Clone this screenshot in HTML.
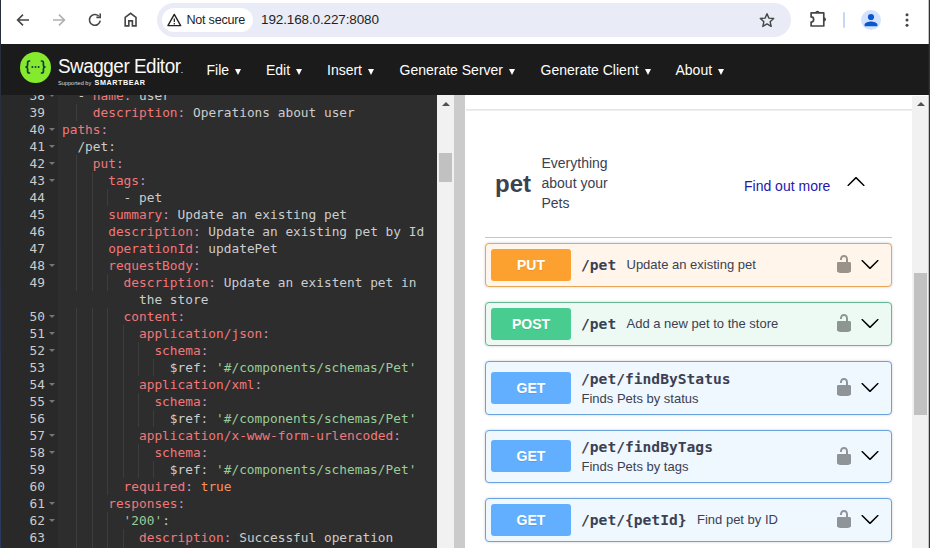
<!DOCTYPE html>
<html lang="en">
<head>
<meta charset="utf-8">
<title>Swagger Editor</title>
<style>
*{box-sizing:border-box;margin:0;padding:0}
html,body{width:930px;height:548px;overflow:hidden;background:#fff}
body{position:relative;font-family:"Liberation Sans",Arial,sans-serif;color:#3b4151}
.abs,#chrome>*,#hdr>*,#ed>*,#ui>*{position:absolute}
i{display:block;font-style:normal}
svg{display:block;overflow:visible}

/* window edges */
#edgeL{left:0;top:0;width:1px;height:548px;background:linear-gradient(#2a2d3a,#2a2f42 40%,#2b3a5e);z-index:50}
#edgeR{left:928px;top:0;width:2px;height:548px;background:linear-gradient(90deg,rgba(48,51,58,.3) 50%,#30333a 50%);z-index:50}

/* ---------- browser chrome ---------- */
#chrome{left:0;top:0;width:930px;height:44px;background:#fff}
#omni{left:157px;top:3px;width:634px;height:34px;border-radius:17px;background:#e9ebf7}
#chip{left:162px;top:8px;width:91px;height:24px;border-radius:12px;background:#fff}
#chiptxt{left:186.5px;top:8px;height:24px;line-height:24px;font-size:12.6px;letter-spacing:-.25px;color:#1f1f1f;white-space:nowrap}
#url{left:261px;top:3px;height:34px;line-height:34px;font-size:13.5px;letter-spacing:-.13px;color:#1f1f1f;white-space:nowrap}
#sep{left:843px;top:12px;width:2px;height:16px;border-radius:1px;background:#c7d6f3}
#avatar{left:861px;top:10px;width:20px;height:20px;border-radius:50%;background:#d3e3fd}

/* ---------- swagger editor top bar ---------- */
#hdr{left:0;top:44px;width:930px;height:50.5px;background:#1b1b1b}
#logo{left:20.3px;top:7.6px;width:31px;height:31px;border-radius:50%;background:#85ea2d}
#brand{left:58px;top:9.3px;font-size:20.5px;line-height:26px;color:#fafafa;white-space:nowrap;letter-spacing:-.5px;transform:scaleX(.92);transform-origin:0 0}
#sup{left:58px;top:35px;font-size:5.6px;line-height:8px;color:#ddd;white-space:nowrap}
#sb{left:94.6px;top:34.6px;font-size:7.2px;line-height:8px;font-weight:bold;color:#fff;white-space:nowrap;letter-spacing:.55px}
.mi{top:16px;height:20px;line-height:20px;font-size:14px;color:#fff;white-space:nowrap}
.mi b{display:inline-block;margin-left:6px;width:0;height:0;border-left:3.6px solid transparent;border-right:3.6px solid transparent;border-top:6.4px solid #fff;vertical-align:0}

/* ---------- ace editor ---------- */
#ed{left:0;top:94.5px;width:437px;height:453.5px;background:#2d2d2d;overflow:hidden;
  font-family:"DejaVu Sans Mono","Liberation Mono",monospace;font-size:12.8px;color:#ccc}
#ed>*{margin-top:-94.5px}
#gut{left:0;top:94.5px;width:58px;height:460px;background:#292929}
.ln{left:0;width:45px;text-align:right;height:17px;line-height:17px;color:#ccc;white-space:pre}
.cl{height:17px;line-height:17px;white-space:pre}
.fd{left:48.7px;width:0;height:0;border-left:3px solid transparent;border-right:3px solid transparent;border-top:3.2px solid #767676}
.ig{width:1px;height:17px;background:#3d3d3d}
.k{color:#f2777a}.c{color:#cc99cc}.t{color:#ccc}.s{color:#99cc99}.n{color:#f99157}

/* editor scrollbar + splitter */
#sbL{left:437px;top:94.5px;width:17px;height:453.5px;background:#f1f1f1}
#sbLt{left:439px;top:153px;width:13px;height:29px;background:#c1c1c1}
#split{left:454px;top:94.5px;width:11px;height:453.5px;background:#cbcbcb}
.arr{width:0;height:0;border-left:4px solid transparent;border-right:4px solid transparent;border-bottom:4px solid #505050}

/* ---------- swagger ui ---------- */
#ui{left:465px;top:94.5px;width:447px;height:453.5px;background:#fff;overflow:hidden}
#ui>*{margin-left:-465px;margin-top:-94.5px}
#shadow{left:466px;top:108.6px;width:446px;height:2px;background:linear-gradient(#e2e2e2,#f1f1f1)}
#tag{left:495px;top:169.7px;font-size:24px;line-height:28px;font-weight:bold;color:#3b4151}
.tagd{left:541.5px;font-size:14px;line-height:20px;color:#3b4151;white-space:nowrap}
#more{left:744px;top:176px;font-size:14px;line-height:20px;color:#2418ad;white-space:nowrap}
#hr{left:485px;top:237px;width:407px;height:1px;background:#c4c6cb}
.op{left:485px;width:407px;border:1px solid;border-radius:4px;box-shadow:0 0 3px rgba(0,0,0,.19)}
.op *{position:absolute}
.put{border-color:#e8a758;background:#fff5ea}
.post{border-color:#62b994;background:#edfaf4}
.get{border-color:#6aa3dc;background:#eff7ff}
.m{left:5px;width:80px;height:32px;border-radius:3px;color:#fff;font-weight:bold;font-size:14px;line-height:32px;text-align:center;text-shadow:0 1px 0 rgba(0,0,0,.1)}
.put .m{background:#fca130}.post .m{background:#49cc90}.get .m{background:#61affe}
.p{left:95px;font-family:"DejaVu Sans Mono","Liberation Mono",monospace;font-weight:bold;font-size:14.62px;line-height:20px;color:#3b4151;white-space:nowrap}
.d{font-size:13px;line-height:18px;color:#3b4151;white-space:nowrap}
.lock{left:348px;width:20px;height:20px;fill:#000;opacity:.4}
.chev{left:373.6px;width:20px;height:20px;fill:#000}

/* page scrollbar */
#sbR{left:912px;top:95.5px;width:16px;height:453.5px;background:#f1f1f1}
#sbRt{left:914px;top:273px;width:13px;height:142px;background:#c1c1c1}
</style>
</head>
<body>

<!-- browser toolbar -->
<div id="chrome" class="abs">
  <svg style="left:15px;top:12px" width="16" height="16" viewBox="0 0 16 16" fill="none" stroke="#444746" stroke-width="1.6"><path d="M14 8H3M8 2.6L2.6 8 8 13.4"/></svg>
  <svg style="left:51px;top:12px" width="16" height="16" viewBox="0 0 16 16" fill="none" stroke="#b0b0b0" stroke-width="1.6"><path d="M2 8h11M8 2.6L13.4 8 8 13.4"/></svg>
  <svg style="left:87px;top:12px" width="16" height="16" viewBox="0 0 16 16" fill="none" stroke="#444746" stroke-width="1.6"><path d="M13.2 8.6A5.4 5.4 0 1 1 11.6 4"/><path d="M13.2 1.6v3.8H9.4" stroke-linejoin="miter"/></svg>
  <svg style="left:123.400px;top:11.200px" width="15.200" height="16.150" viewBox="0 0 16 17" fill="none" stroke="#444746" stroke-width="1.7"><path d="M2.3 15.7V6.8L8 2.4l5.7 4.4v8.9H9.9v-5.3H6.1v5.3z"/></svg>
  <div id="omni"></div>
  <div id="chip"></div>
  <svg style="left:166.700px;top:12.600px" width="14.600" height="13.700" viewBox="0 0 16 15" fill="none" stroke="#1f1f1f" stroke-width="1.5"><path d="M8 1.6L15 13.8H1z" stroke-linejoin="round"/><path d="M8 6v4M8 11v1.5" stroke-width="1.3"/></svg>
  <div id="chiptxt">Not secure</div>
  <div id="url">192.168.0.227:8080</div>
  <svg style="left:759px;top:12px" width="16" height="16" viewBox="0 0 16 16" fill="none" stroke="#444746" stroke-width="1.4"><path d="M8 1.7l1.9 4.4 4.8.4-3.6 3.2 1.1 4.7L8 11.9l-4.2 2.5 1.1-4.7L1.3 6.5l4.8-.4z" stroke-linejoin="round"/></svg>
  <svg style="left:808.600px;top:9.400px" width="19" height="19" viewBox="0 0 18 18" fill="none" stroke="#444746" stroke-width="1.6"><path d="M2 3.700H14V16.100H2V12.300C3.200 12.300 4.400 11.400 4.400 9.900C4.400 8.400 3.200 7.500 2 7.500Z" stroke-linejoin="round"/><path d="M5.900 3.700a2.100 2.100 0 0 1 4.200 0z" fill="#444746" stroke="none"/><path d="M14 7.700a2.100 2.100 0 0 1 0 4.200z" fill="#444746" stroke="none"/></svg>
  <div id="sep"></div>
  <div id="avatar"></div>
  <svg style="left:864px;top:13px" width="14" height="14" viewBox="0 0 14 14" fill="#0b57d0"><circle cx="7" cy="4" r="3.100"/><path d="M.6 13.200v-1.600C.6 9.300 4.900 8.400 7 8.400s6.400.9 6.400 3.200v1.600z"/></svg>
  <svg style="left:905px;top:13px" width="4" height="14" viewBox="0 0 4 14" fill="#444746"><circle cx="2" cy="1.700" r="1.500"/><circle cx="2" cy="7" r="1.500"/><circle cx="2" cy="12.300" r="1.500"/></svg>
</div>

<!-- swagger editor top bar -->
<div id="hdr" class="abs">
  <div id="logo"></div>
  <svg style="left:24.3px;top:16.100px" width="23" height="14" viewBox="0 0 23 14" fill="none" stroke="#173647" stroke-width="1.7"><path d="M6.200 1H5.200C3.900 1 3.600 1.700 3.600 2.800v2.100C3.600 6.200 2.900 7 1.400 7c1.500 0 2.200.8 2.200 2.100v2.100c0 1.100.3 1.800 1.600 1.800h1"/><path d="M16.800 1h1c1.300 0 1.600.7 1.600 1.800v2.100c0 1.300.7 2.100 2.200 2.100-1.500 0-2.200.8-2.200 2.100v2.100c0 1.100-.3 1.800-1.600 1.800h-1"/><g fill="#173647" stroke="none"><circle cx="8.400" cy="7" r="1"/><circle cx="11.500" cy="7" r="1"/><circle cx="14.600" cy="7" r="1"/></g></svg>
  <div id="brand">Swagger Editor</div>
  <i class="abs" style="left:180.600px;top:27.800px;width:2.600px;height:1.300px;background:#8a8a8a"></i>
  <div id="sup">Supported by</div>
  <div id="sb">SMARTBEAR</div>
  <div class="mi" style="left:206.500px">File<b></b></div>
  <div class="mi" style="left:266px">Edit<b></b></div>
  <div class="mi" style="left:327px">Insert<b></b></div>
  <div class="mi" style="left:399.500px">Generate Server<b></b></div>
  <div class="mi" style="left:540.500px">Generate Client<b></b></div>
  <div class="mi" style="left:675.500px">About<b></b></div>
</div>

<!-- ace editor -->
<div id="ed" class="abs">
<div id="gut"></div>
<div class="ln" style="top:86.5px">38</div>
<i class="fd" style="top:94.0px"></i>
<div class="cl" style="top:86.5px;left:77.4px"><span class="t">- </span><span class="k">name</span><span class="c">:</span><span class="t"> user</span></div>
<div class="ln" style="top:103.5px">39</div>
<i class="ig" style="left:76.4px;top:103.5px"></i>
<div class="cl" style="top:103.5px;left:92.8px"><span class="k">description</span><span class="c">:</span><span class="t"> Operations about user</span></div>
<div class="ln" style="top:120.5px">40</div>
<i class="fd" style="top:128.0px"></i>
<div class="cl" style="top:120.5px;left:62.0px"><span class="k">paths</span><span class="c">:</span></div>
<div class="ln" style="top:137.5px">41</div>
<i class="fd" style="top:145.0px"></i>
<div class="cl" style="top:137.5px;left:77.4px"><span class="t">/pet:</span></div>
<div class="ln" style="top:154.5px">42</div>
<i class="fd" style="top:162.0px"></i>
<i class="ig" style="left:76.4px;top:154.5px"></i>
<div class="cl" style="top:154.5px;left:92.8px"><span class="k">put</span><span class="c">:</span></div>
<div class="ln" style="top:171.5px">43</div>
<i class="fd" style="top:179.0px"></i>
<i class="ig" style="left:76.4px;top:171.5px"></i>
<i class="ig" style="left:91.8px;top:171.5px"></i>
<div class="cl" style="top:171.5px;left:108.2px"><span class="k">tags</span><span class="c">:</span></div>
<div class="ln" style="top:188.5px">44</div>
<i class="ig" style="left:76.4px;top:188.5px"></i>
<i class="ig" style="left:91.8px;top:188.5px"></i>
<i class="ig" style="left:107.2px;top:188.5px"></i>
<div class="cl" style="top:188.5px;left:123.6px"><span class="t">- pet</span></div>
<div class="ln" style="top:205.5px">45</div>
<i class="ig" style="left:76.4px;top:205.5px"></i>
<i class="ig" style="left:91.8px;top:205.5px"></i>
<div class="cl" style="top:205.5px;left:108.2px"><span class="k">summary</span><span class="c">:</span><span class="t"> Update an existing pet</span></div>
<div class="ln" style="top:222.5px">46</div>
<i class="ig" style="left:76.4px;top:222.5px"></i>
<i class="ig" style="left:91.8px;top:222.5px"></i>
<div class="cl" style="top:222.5px;left:108.2px"><span class="k">description</span><span class="c">:</span><span class="t"> Update an existing pet by Id</span></div>
<div class="ln" style="top:239.5px">47</div>
<i class="ig" style="left:76.4px;top:239.5px"></i>
<i class="ig" style="left:91.8px;top:239.5px"></i>
<div class="cl" style="top:239.5px;left:108.2px"><span class="k">operationId</span><span class="c">:</span><span class="t"> updatePet</span></div>
<div class="ln" style="top:256.5px">48</div>
<i class="fd" style="top:264.0px"></i>
<i class="ig" style="left:76.4px;top:256.5px"></i>
<i class="ig" style="left:91.8px;top:256.5px"></i>
<div class="cl" style="top:256.5px;left:108.2px"><span class="k">requestBody</span><span class="c">:</span></div>
<div class="ln" style="top:273.5px">49</div>
<i class="ig" style="left:76.4px;top:273.5px"></i>
<i class="ig" style="left:91.8px;top:273.5px"></i>
<i class="ig" style="left:107.2px;top:273.5px"></i>
<div class="cl" style="top:273.5px;left:123.6px"><span class="k">description</span><span class="c">:</span><span class="t"> Update an existent pet in</span></div>
<div class="cl" style="top:290.5px;left:139.0px"><span class="t">the store</span></div>
<div class="ln" style="top:307.5px">50</div>
<i class="fd" style="top:315.0px"></i>
<i class="ig" style="left:76.4px;top:307.5px"></i>
<i class="ig" style="left:91.8px;top:307.5px"></i>
<i class="ig" style="left:107.2px;top:307.5px"></i>
<div class="cl" style="top:307.5px;left:123.6px"><span class="k">content</span><span class="c">:</span></div>
<div class="ln" style="top:324.5px">51</div>
<i class="fd" style="top:332.0px"></i>
<i class="ig" style="left:76.4px;top:324.5px"></i>
<i class="ig" style="left:91.8px;top:324.5px"></i>
<i class="ig" style="left:107.2px;top:324.5px"></i>
<i class="ig" style="left:122.6px;top:324.5px"></i>
<div class="cl" style="top:324.5px;left:139.0px"><span class="k">application/json</span><span class="c">:</span></div>
<div class="ln" style="top:341.5px">52</div>
<i class="fd" style="top:349.0px"></i>
<i class="ig" style="left:76.4px;top:341.5px"></i>
<i class="ig" style="left:91.8px;top:341.5px"></i>
<i class="ig" style="left:107.2px;top:341.5px"></i>
<i class="ig" style="left:122.6px;top:341.5px"></i>
<i class="ig" style="left:138.0px;top:341.5px"></i>
<div class="cl" style="top:341.5px;left:154.4px"><span class="k">schema</span><span class="c">:</span></div>
<div class="ln" style="top:358.5px">53</div>
<i class="ig" style="left:76.4px;top:358.5px"></i>
<i class="ig" style="left:91.8px;top:358.5px"></i>
<i class="ig" style="left:107.2px;top:358.5px"></i>
<i class="ig" style="left:122.6px;top:358.5px"></i>
<i class="ig" style="left:138.0px;top:358.5px"></i>
<i class="ig" style="left:153.4px;top:358.5px"></i>
<div class="cl" style="top:358.5px;left:169.8px"><span class="t">$ref: </span><span class="s">&#x27;#/components/schemas/Pet&#x27;</span></div>
<div class="ln" style="top:375.5px">54</div>
<i class="fd" style="top:383.0px"></i>
<i class="ig" style="left:76.4px;top:375.5px"></i>
<i class="ig" style="left:91.8px;top:375.5px"></i>
<i class="ig" style="left:107.2px;top:375.5px"></i>
<i class="ig" style="left:122.6px;top:375.5px"></i>
<div class="cl" style="top:375.5px;left:139.0px"><span class="k">application/xml</span><span class="c">:</span></div>
<div class="ln" style="top:392.5px">55</div>
<i class="fd" style="top:400.0px"></i>
<i class="ig" style="left:76.4px;top:392.5px"></i>
<i class="ig" style="left:91.8px;top:392.5px"></i>
<i class="ig" style="left:107.2px;top:392.5px"></i>
<i class="ig" style="left:122.6px;top:392.5px"></i>
<i class="ig" style="left:138.0px;top:392.5px"></i>
<div class="cl" style="top:392.5px;left:154.4px"><span class="k">schema</span><span class="c">:</span></div>
<div class="ln" style="top:409.5px">56</div>
<i class="ig" style="left:76.4px;top:409.5px"></i>
<i class="ig" style="left:91.8px;top:409.5px"></i>
<i class="ig" style="left:107.2px;top:409.5px"></i>
<i class="ig" style="left:122.6px;top:409.5px"></i>
<i class="ig" style="left:138.0px;top:409.5px"></i>
<i class="ig" style="left:153.4px;top:409.5px"></i>
<div class="cl" style="top:409.5px;left:169.8px"><span class="t">$ref: </span><span class="s">&#x27;#/components/schemas/Pet&#x27;</span></div>
<div class="ln" style="top:426.5px">57</div>
<i class="fd" style="top:434.0px"></i>
<i class="ig" style="left:76.4px;top:426.5px"></i>
<i class="ig" style="left:91.8px;top:426.5px"></i>
<i class="ig" style="left:107.2px;top:426.5px"></i>
<i class="ig" style="left:122.6px;top:426.5px"></i>
<div class="cl" style="top:426.5px;left:139.0px"><span class="k">application/x-www-form-urlencoded</span><span class="c">:</span></div>
<div class="ln" style="top:443.5px">58</div>
<i class="fd" style="top:451.0px"></i>
<i class="ig" style="left:76.4px;top:443.5px"></i>
<i class="ig" style="left:91.8px;top:443.5px"></i>
<i class="ig" style="left:107.2px;top:443.5px"></i>
<i class="ig" style="left:122.6px;top:443.5px"></i>
<i class="ig" style="left:138.0px;top:443.5px"></i>
<div class="cl" style="top:443.5px;left:154.4px"><span class="k">schema</span><span class="c">:</span></div>
<div class="ln" style="top:460.5px">59</div>
<i class="ig" style="left:76.4px;top:460.5px"></i>
<i class="ig" style="left:91.8px;top:460.5px"></i>
<i class="ig" style="left:107.2px;top:460.5px"></i>
<i class="ig" style="left:122.6px;top:460.5px"></i>
<i class="ig" style="left:138.0px;top:460.5px"></i>
<i class="ig" style="left:153.4px;top:460.5px"></i>
<div class="cl" style="top:460.5px;left:169.8px"><span class="t">$ref: </span><span class="s">&#x27;#/components/schemas/Pet&#x27;</span></div>
<div class="ln" style="top:477.5px">60</div>
<i class="ig" style="left:76.4px;top:477.5px"></i>
<i class="ig" style="left:91.8px;top:477.5px"></i>
<i class="ig" style="left:107.2px;top:477.5px"></i>
<div class="cl" style="top:477.5px;left:123.6px"><span class="k">required</span><span class="c">:</span><span class="t"> </span><span class="n">true</span></div>
<div class="ln" style="top:494.5px">61</div>
<i class="fd" style="top:502.0px"></i>
<i class="ig" style="left:76.4px;top:494.5px"></i>
<i class="ig" style="left:91.8px;top:494.5px"></i>
<div class="cl" style="top:494.5px;left:108.2px"><span class="k">responses</span><span class="c">:</span></div>
<div class="ln" style="top:511.5px">62</div>
<i class="fd" style="top:519.0px"></i>
<i class="ig" style="left:76.4px;top:511.5px"></i>
<i class="ig" style="left:91.8px;top:511.5px"></i>
<i class="ig" style="left:107.2px;top:511.5px"></i>
<div class="cl" style="top:511.5px;left:123.6px"><span class="s">&#x27;200&#x27;</span><span class="t">:</span></div>
<div class="ln" style="top:528.5px">63</div>
<i class="ig" style="left:76.4px;top:528.5px"></i>
<i class="ig" style="left:91.8px;top:528.5px"></i>
<i class="ig" style="left:107.2px;top:528.5px"></i>
<i class="ig" style="left:122.6px;top:528.5px"></i>
<div class="cl" style="top:528.5px;left:139.0px"><span class="k">description</span><span class="c">:</span><span class="t"> Successful operation</span></div>
<div class="ln" style="top:545.5px">64</div>
<i class="fd" style="top:553.0px"></i>
<i class="ig" style="left:76.4px;top:545.5px"></i>
<i class="ig" style="left:91.8px;top:545.5px"></i>
<i class="ig" style="left:107.2px;top:545.5px"></i>
<i class="ig" style="left:122.6px;top:545.5px"></i>
<div class="cl" style="top:545.5px;left:139.0px"><span class="k">content</span><span class="c">:</span></div>
</div>
<div id="sbL" class="abs"></div>
<i class="arr abs" style="left:441.500px;top:102px"></i>
<div id="sbLt" class="abs"></div>
<div id="split" class="abs"></div>

<!-- swagger ui -->
<div id="ui" class="abs">
  <div id="shadow"></div>
  <div id="tag">pet</div>
  <div class="tagd" style="top:153.300px">Everything</div>
  <div class="tagd" style="top:173px">about your</div>
  <div class="tagd" style="top:192.600px">Pets</div>
  <div id="more">Find out more</div>
  <svg style="left:846.200px;top:171.400px" width="20" height="20" viewBox="0 0 20 20"><path d="M17.418 14.908c.272.268.709.268.979 0s.271-.701 0-.969l-7.908-7.830c-.27-.268-.707-.268-.979 0l-7.908 7.830c-.27.268-.27.701 0 .969.271.268.709.268.979 0L10 7.767l7.418 7.141z"/></svg>
  <div id="hr"></div>

  <div class="op put" style="top:243px;height:44px">
    <div class="m" style="top:5px">PUT</div>
    <div class="p" style="top:11px">/pet</div>
    <div class="d" style="left:140.500px;top:12px">Update an existing pet</div>
    <svg class="lock" style="top:10px" viewBox="0 0 20 20"><path d="M15.800 8H14V5.600C14 2.703 12.665 1 10 1 7.334 1 6 2.703 6 5.600V6h2v-.801C8 3.754 8.797 3 10 3c1.203 0 2 .754 2 2.199V8H4c-.553 0-1 .646-1 1.199V17c0 .549.428 1.139.951 1.307l1.197.387C5.672 18.861 6.550 19 7.100 19h5.800c.549 0 1.428-.139 1.951-.307l1.196-.387c.524-.167.953-.757.953-1.306V9.199C17 8.646 16.352 8 15.800 8z"/></svg>
    <svg class="chev" style="top:9.500px" viewBox="0 0 20 20"><path d="M17.418 6.109c.272-.268.709-.268.979 0s.271.701 0 .969l-7.908 7.830c-.27.268-.707.268-.979 0l-7.908-7.830c-.27-.268-.27-.701 0-.969.271-.268.709-.268.979 0L10 13.250l7.418-7.141z"/></svg>
  </div>

  <div class="op post" style="top:302px;height:44px">
    <div class="m" style="top:5px">POST</div>
    <div class="p" style="top:11px">/pet</div>
    <div class="d" style="left:140.500px;top:12px">Add a new pet to the store</div>
    <svg class="lock" style="top:10px" viewBox="0 0 20 20"><path d="M15.800 8H14V5.600C14 2.703 12.665 1 10 1 7.334 1 6 2.703 6 5.600V6h2v-.801C8 3.754 8.797 3 10 3c1.203 0 2 .754 2 2.199V8H4c-.553 0-1 .646-1 1.199V17c0 .549.428 1.139.951 1.307l1.197.387C5.672 18.861 6.550 19 7.100 19h5.800c.549 0 1.428-.139 1.951-.307l1.196-.387c.524-.167.953-.757.953-1.306V9.199C17 8.646 16.352 8 15.800 8z"/></svg>
    <svg class="chev" style="top:9.500px" viewBox="0 0 20 20"><path d="M17.418 6.109c.272-.268.709-.268.979 0s.271.701 0 .969l-7.908 7.830c-.27.268-.707.268-.979 0l-7.908-7.830c-.27-.268-.27-.701 0-.969.271-.268.709-.268.979 0L10 13.250l7.418-7.141z"/></svg>
  </div>

  <div class="op get" style="top:361px;height:54px">
    <div class="m" style="top:10px">GET</div>
    <div class="p" style="top:6.500px">/pet/findByStatus</div>
    <div class="d" style="left:95.500px;top:27.500px">Finds Pets by status</div>
    <svg class="lock" style="top:15px" viewBox="0 0 20 20"><path d="M15.800 8H14V5.600C14 2.703 12.665 1 10 1 7.334 1 6 2.703 6 5.600V6h2v-.801C8 3.754 8.797 3 10 3c1.203 0 2 .754 2 2.199V8H4c-.553 0-1 .646-1 1.199V17c0 .549.428 1.139.951 1.307l1.197.387C5.672 18.861 6.550 19 7.100 19h5.800c.549 0 1.428-.139 1.951-.307l1.196-.387c.524-.167.953-.757.953-1.306V9.199C17 8.646 16.352 8 15.800 8z"/></svg>
    <svg class="chev" style="top:14.500px" viewBox="0 0 20 20"><path d="M17.418 6.109c.272-.268.709-.268.979 0s.271.701 0 .969l-7.908 7.830c-.27.268-.707.268-.979 0l-7.908-7.830c-.27-.268-.27-.701 0-.969.271-.268.709-.268.979 0L10 13.250l7.418-7.141z"/></svg>
  </div>

  <div class="op get" style="top:430px;height:53px">
    <div class="m" style="top:8.500px">GET</div>
    <div class="p" style="top:6px">/pet/findByTags</div>
    <div class="d" style="left:95.500px;top:26.500px">Finds Pets by tags</div>
    <svg class="lock" style="top:14.500px" viewBox="0 0 20 20"><path d="M15.800 8H14V5.600C14 2.703 12.665 1 10 1 7.334 1 6 2.703 6 5.600V6h2v-.801C8 3.754 8.797 3 10 3c1.203 0 2 .754 2 2.199V8H4c-.553 0-1 .646-1 1.199V17c0 .549.428 1.139.951 1.307l1.197.387C5.672 18.861 6.550 19 7.100 19h5.800c.549 0 1.428-.139 1.951-.307l1.196-.387c.524-.167.953-.757.953-1.306V9.199C17 8.646 16.352 8 15.800 8z"/></svg>
    <svg class="chev" style="top:14px" viewBox="0 0 20 20"><path d="M17.418 6.109c.272-.268.709-.268.979 0s.271.701 0 .969l-7.908 7.830c-.27.268-.707.268-.979 0l-7.908-7.830c-.27-.268-.27-.701 0-.969.271-.268.709-.268.979 0L10 13.250l7.418-7.141z"/></svg>
  </div>

  <div class="op get" style="top:498px;height:44px">
    <div class="m" style="top:5px">GET</div>
    <div class="p" style="top:11px">/pet/{petId}</div>
    <div class="d" style="left:211px;top:12px">Find pet by ID</div>
    <svg class="lock" style="top:10px" viewBox="0 0 20 20"><path d="M15.800 8H14V5.600C14 2.703 12.665 1 10 1 7.334 1 6 2.703 6 5.600V6h2v-.801C8 3.754 8.797 3 10 3c1.203 0 2 .754 2 2.199V8H4c-.553 0-1 .646-1 1.199V17c0 .549.428 1.139.951 1.307l1.197.387C5.672 18.861 6.550 19 7.100 19h5.800c.549 0 1.428-.139 1.951-.307l1.196-.387c.524-.167.953-.757.953-1.306V9.199C17 8.646 16.352 8 15.800 8z"/></svg>
    <svg class="chev" style="top:9.500px" viewBox="0 0 20 20"><path d="M17.418 6.109c.272-.268.709-.268.979 0s.271.701 0 .969l-7.908 7.830c-.27.268-.707.268-.979 0l-7.908-7.830c-.27-.268-.27-.701 0-.969.271-.268.709-.268.979 0L10 13.250l7.418-7.141z"/></svg>
  </div>
</div>
<div id="sbR" class="abs"></div>
<i class="arr abs" style="left:916.500px;top:102px"></i>
<div id="sbRt" class="abs"></div>

<div id="edgeL" class="abs"></div>
<div id="edgeR" class="abs"></div>
</body>
</html>
